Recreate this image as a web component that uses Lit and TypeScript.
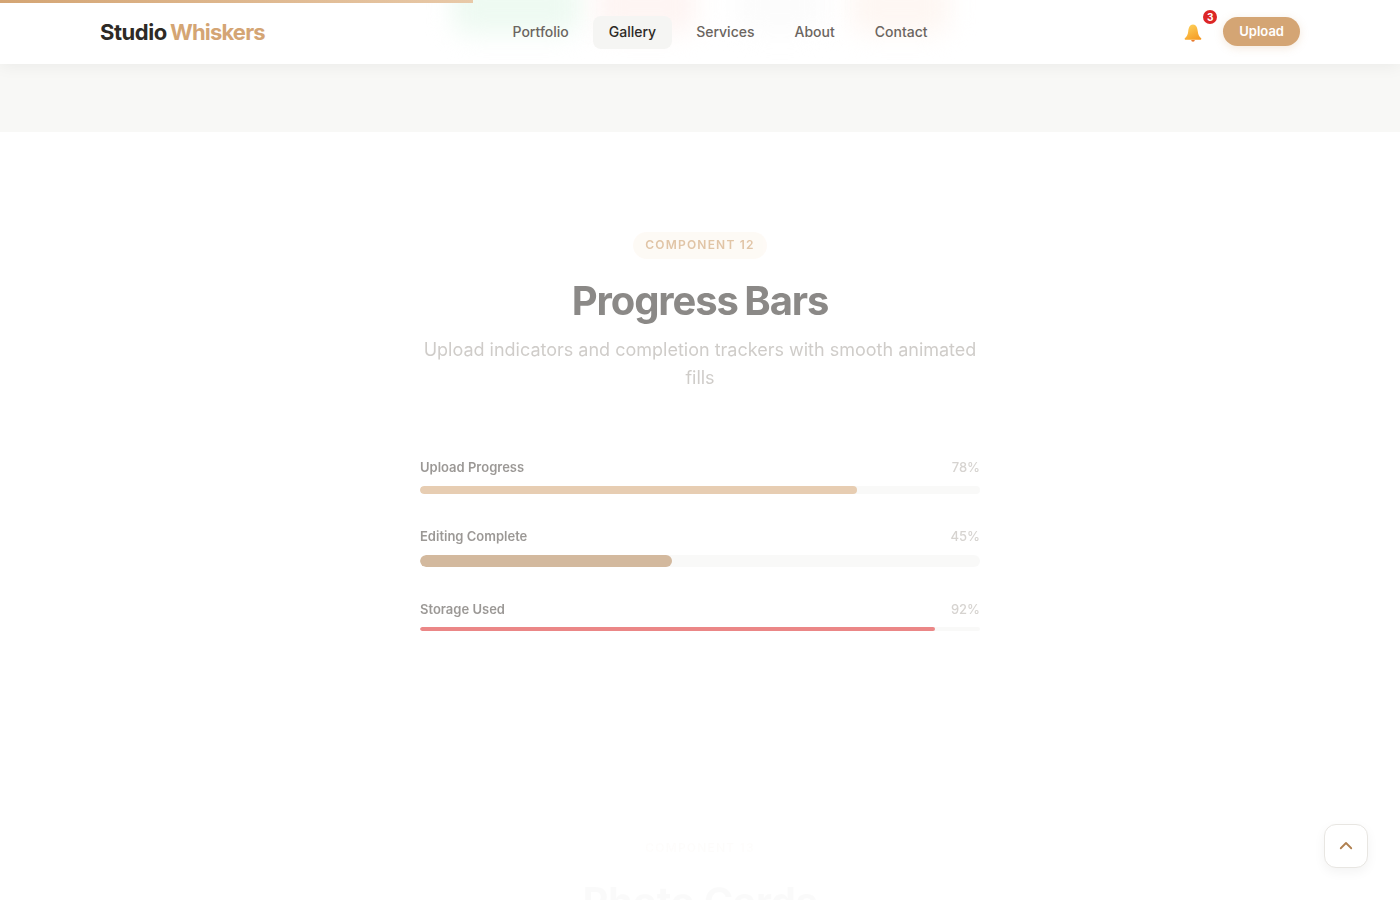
import { LitElement, html, css } from "lit";
import { customElement } from "lit/decorators.js";

const bars = [
  { label: "Upload Progress", value: 78, kind: "medium", width: "78%" },
  { label: "Editing Complete", value: 45, kind: "large", width: "45%" },
  { label: "Storage Used", value: 92, kind: "small", width: "92%" },
];

const links = ["Portfolio", "Gallery", "Services", "About", "Contact"];

@customElement("app-root")
export class AppRoot extends LitElement {
  static styles = css`
    * {
      margin: 0;
      padding: 0;
      box-sizing: border-box;
    }

    :host {
      display: block;
      height: 900px;
      overflow: hidden;
      position: relative;
      background: #fff;
      font-family: Inter, "Liberation Sans", sans-serif;
    }

    .scroll-bar {
      position: absolute;
      top: 0;
      left: 0;
      z-index: 3;
      width: 33.8%;
      height: 3px;
      background: linear-gradient(90deg, #d4a574, #e8c9a8);
    }

    .blobs {
      position: absolute;
      top: 0;
      left: 0;
      right: 0;
      height: 64px;
      overflow: hidden;
      pointer-events: none;
    }

    .blob {
      position: absolute;
      top: -24px;
      height: 58px;
      border-radius: 16px;
      filter: blur(12px);
    }

    .blob.green {
      left: 452px;
      width: 128px;
      background: #eefaf2;
    }

    .blob.red {
      left: 596px;
      width: 100px;
      background: #fef5f3;
    }

    .blob.grey {
      left: 735px;
      width: 90px;
      background: #fcfcfc;
    }

    .blob.peach {
      left: 850px;
      width: 100px;
      background: #fef7f3;
    }

    header {
      position: relative;
      height: 64px;
      padding: 0 100px;
      display: flex;
      align-items: center;
      justify-content: space-between;
      background: #fff;
      box-shadow: 0 2px 16px rgba(0, 0, 0, 0.06);
      z-index: 1;
    }

    .logo {
      position: relative;
      font-size: 22px;
      font-weight: 700;
      letter-spacing: -0.45px;
      word-spacing: -1.5px;
      color: #2d2a26;
    }

    .logo span {
      letter-spacing: -0.85px;
      color: #d4a574;
    }

    nav {
      position: relative;
      display: flex;
      gap: 8px;
    }

    nav a {
      padding: 7px 16px 9px;
      border-radius: 8px;
      font-size: 14px;
      font-weight: 500;
      line-height: 17px;
      color: #6b6560;
    }

    nav a.active {
      background: #f5f5f3;
      color: #2d2a26;
    }

    .actions {
      position: relative;
      display: flex;
      align-items: center;
      gap: 20px;
    }

    .bell {
      position: relative;
      display: block;
      width: 20px;
      height: 20px;
      margin-left: 8px;
    }

    .bell svg {
      display: block;
    }

    .count {
      position: absolute;
      top: -12px;
      right: -14px;
      width: 14px;
      height: 14px;
      border-radius: 50%;
      background: #dc2626;
      color: #fff;
      font-size: 10px;
      font-weight: 700;
      line-height: 14px;
      text-align: center;
    }

    .upload {
      padding: 0 16px;
      height: 29px;
      margin-top: -2px;
      border-radius: 15px;
      background: #d4a574;
      color: #fff;
      font-size: 13px;
      font-weight: 600;
      line-height: 29px;
      box-shadow: 0 2px 8px rgba(212, 165, 116, 0.25);
    }

    .band {
      height: 68px;
      background: #f8f8f6;
    }

    .section {
      padding-top: 100px;
      display: flex;
      flex-direction: column;
      align-items: center;
      opacity: 0.55;
    }

    .tag {
      padding: 0 12px;
      height: 27px;
      border-radius: 14px;
      background: #fdf6ee;
      color: #c9965f;
      font-size: 12px;
      font-weight: 600;
      line-height: 26px;
      letter-spacing: 1.2px;
    }

    h2 {
      margin-top: 16px;
      font-size: 40px;
      line-height: 52px;
      font-weight: 700;
      letter-spacing: -1.1px;
      word-spacing: -2px;
      color: #2d2a26;
    }

    .sub {
      margin-top: 9px;
      width: 560px;
      text-align: center;
      font-size: 18px;
      line-height: 28px;
      color: #a8a39d;
    }

    .list {
      width: 560px;
      margin-top: 65px;
      display: flex;
      flex-direction: column;
      gap: 32px;
    }

    .row {
      display: flex;
      justify-content: space-between;
      font-size: 13px;
      line-height: 21px;
      font-weight: 600;
      color: #4a4540;
      margin-bottom: 8px;
    }

    .row .pct {
      font-weight: 500;
      color: #b5b0aa;
    }

    .track {
      height: 8px;
      border-radius: 4px;
      background: #f5f5f3;
      overflow: hidden;
    }

    .track.large {
      height: 12px;
      border-radius: 6px;
    }

    .track.small {
      height: 4px;
      margin-top: -1px;
      border-radius: 2px;
    }

    .fill {
      height: 100%;
      border-radius: inherit;
      background: #d4a574;
    }

    .track.large .fill {
      background: #b08050;
    }

    .track.small .fill {
      background: #dc2626;
    }

    .next {
      margin-top: 202px;
      display: flex;
      flex-direction: column;
      align-items: center;
      opacity: 0.015;
    }

    .next .tag {
      background: none;
      line-height: 29px;
    }

    .next h2 {
      letter-spacing: -0.4px;
      word-spacing: 0;
    }

    .top-btn {
      position: absolute;
      right: 32px;
      bottom: 32px;
      width: 44px;
      height: 44px;
      border-radius: 12px;
      background: #fff;
      border: 1px solid #e8e6e2;
      box-shadow: 0 4px 12px rgba(0, 0, 0, 0.05);
      display: flex;
      align-items: center;
      justify-content: center;
      z-index: 4;
    }
  `;

  render() {
    return html`
      <div class="scroll-bar"></div>
      <header>
        <div class="blobs">
          <div class="blob green"></div>
          <div class="blob red"></div>
          <div class="blob grey"></div>
          <div class="blob peach"></div>
        </div>
        <div class="logo">Studio <span>Whiskers</span></div>
        <nav>
          ${links.map((l) => html`<a class=${l === "Gallery" ? "active" : ""}>${l}</a>`)}
        </nav>
        <div class="actions">
          <div class="bell">
            <svg width="20" height="20" viewBox="0 -1 20 20">
              <defs>
                <linearGradient id="bellFill" x1="0.2" y1="0" x2="0.8" y2="1">
                  <stop offset="0" stop-color="#fdd05a"></stop>
                  <stop offset="1" stop-color="#f59a23"></stop>
                </linearGradient>
              </defs>
              <path d="M10 1.6C6.8 1.6 5.6 4.8 5.2 8.4 4.8 11.6 3.8 13.6 1.8 15.2 1.4 15.9 1.8 16.8 2.8 16.8H17.2C18.2 16.8 18.6 15.9 18.2 15.2 16.2 13.6 15.2 11.6 14.8 8.4 14.4 4.8 13.2 1.6 10 1.6Z" fill="url(#bellFill)"></path>
              <path d="M8.2 16.9a1.8 1.8 0 0 0 3.6 0Z" fill="#e8792b"></path>
            </svg>
            <span class="count">3</span>
          </div>
          <div class="upload">Upload</div>
        </div>
      </header>
      <div class="band"></div>
      <section class="section">
        <div class="tag">COMPONENT 12</div>
        <h2>Progress Bars</h2>
        <p class="sub">Upload indicators and completion trackers with smooth animated fills</p>
        <div class="list">
          ${bars.map(
            (b) => html`
              <div>
                <div class="row"><span>${b.label}</span><span class="pct">${b.value}%</span></div>
                <div class="track ${b.kind}">
                  <div class="fill" style="width: ${b.width}"></div>
                </div>
              </div>
            `
          )}
        </div>
      </section>
      <section class="next">
        <div class="tag">COMPONENT 13</div>
        <h2>Photo Cards</h2>
      </section>
      <div class="top-btn">
        <svg width="18" height="18" viewBox="0 0 24 24" fill="none" stroke="#b08050" stroke-width="2.4" stroke-linecap="round" stroke-linejoin="round">
          <path d="M5 15l7-7 7 7"></path>
        </svg>
      </div>
    `;
  }
}
